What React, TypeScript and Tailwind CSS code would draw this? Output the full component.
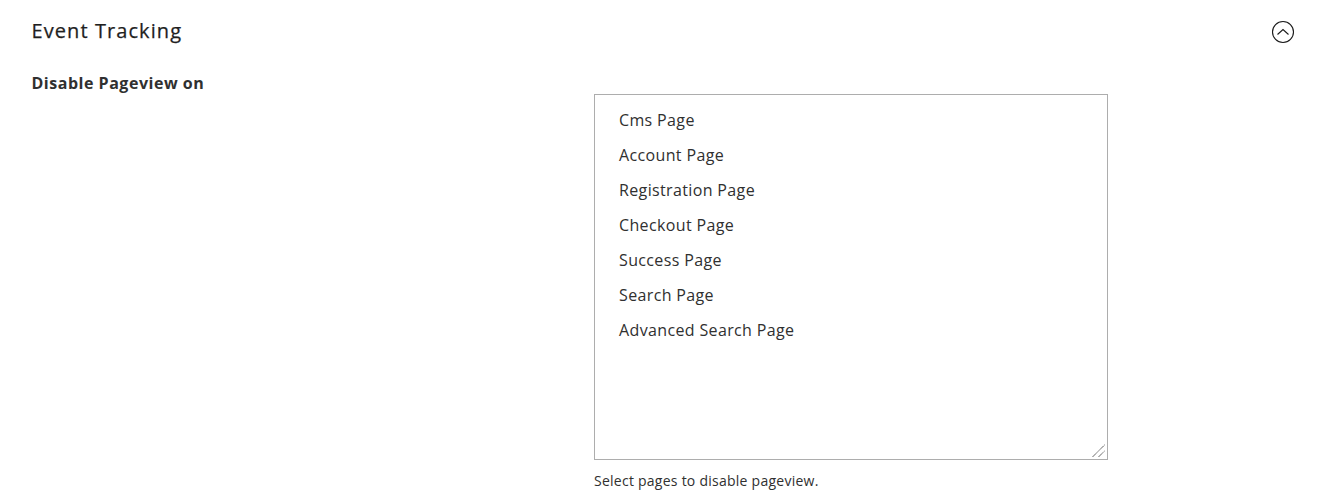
export default function App() {
  const pages = ["Cms Page", "Account Page", "Registration Page", "Checkout Page", "Success Page", "Search Page", "Advanced Search Page"];
  return (
    <div className="w-[1317px] h-[497px] overflow-hidden bg-white text-[#303030] font-['Open_Sans',sans-serif]">
      <div className="flex items-center justify-between pl-[31.5px] pr-[22px] pt-[17px]">
        <h2 className="text-[20px] leading-[28px] font-normal tracking-[1.08px] text-[#1f1f1f] [-webkit-text-stroke:0.25px_#1f1f1f]">Event Tracking</h2>
        <svg width="24" height="24" viewBox="0 0 24 24" fill="none" stroke="#1a1a1a" className="mt-[2px]">
          <circle cx="12" cy="12" r="10.5" strokeWidth="1.1" />
          <path d="M6.5 14.5 L12 9.5 L17.5 14.5" strokeWidth="1.1" />
        </svg>
      </div>
      <div className="flex pl-[31.5px] mt-[27px]">
        <div className="w-[562.5px] text-[16px] leading-[22px] font-bold tracking-[0.52px]">Disable Pageview on</div>
        <div className="w-[514px] mt-[22px]">
          <div className="relative h-[366px] w-[514px] border border-[#adadad] pl-[24px] pt-[8px]">
            {pages.map((p) => (
              <div key={p} className="h-[35px] text-[16px] leading-[35px] tracking-[0.36px] text-[#303030]">{p}</div>
            ))}
            <svg width="14" height="14" viewBox="0 0 14 14" fill="none" stroke="#2a2a2a" strokeDasharray="1 0.6" className="absolute right-[1px] bottom-[1px]">
              <path d="M0.5 13 L12.5 1" />
              <path d="M6.5 13 L12.5 7" />
            </svg>
          </div>
          <p className="mt-[11px] text-[14px] leading-[20px] tracking-[0.25px] text-[#303030]">Select pages to disable pageview.</p>
        </div>
      </div>
    </div>
  );
}
